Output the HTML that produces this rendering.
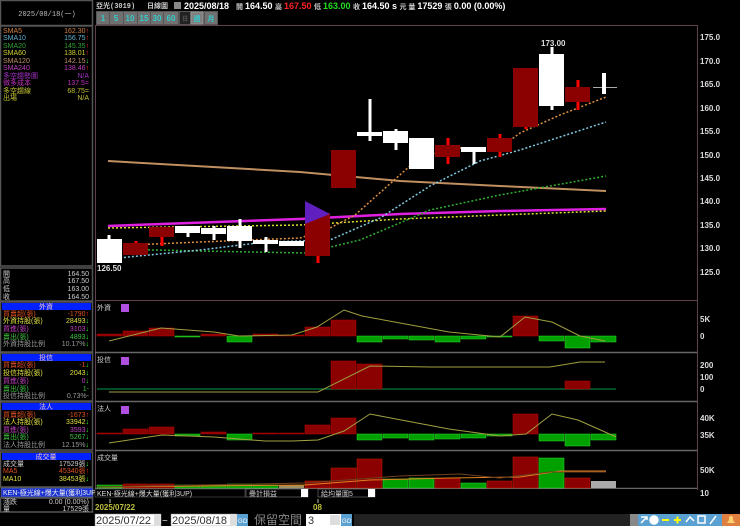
<!DOCTYPE html>
<html><head><meta charset="utf-8"><style>
html,body{margin:0;padding:0;background:#000;width:740px;height:526px;overflow:hidden}
svg{display:block}
text{font-family:"Liberation Sans","Noto Sans CJK TC",sans-serif}
.m{font-family:"Liberation Mono","Noto Sans CJK TC",monospace;font-size:7px}
.ax{font-size:8px;fill:#ddd;font-weight:bold}
</style></head><body>
<svg width="740" height="526" viewBox="0 0 740 526" xmlns="http://www.w3.org/2000/svg">
<rect width="740" height="526" fill="#000"/>
<g fill="none" stroke="#555" stroke-width="1.5">
<rect x="0.5" y="0.5" width="92" height="25"/>
<rect x="0.5" y="26" width="92" height="240"/>
<rect x="0.5" y="268" width="92" height="33"/>
<rect x="0.5" y="302" width="92" height="50"/>
<rect x="0.5" y="353" width="92" height="48"/>
<rect x="0.5" y="402" width="92" height="48"/>
<rect x="0.5" y="452" width="92" height="35"/>
<rect x="0.5" y="498" width="92" height="14"/>
</g>
<text x="47" y="16" text-anchor="middle" class="m" fill="#bbb">2025/08/18(一)</text>
<g class="m">
<text x="3" y="33" fill="#d08040">SMA5</text><text x="89" y="33" text-anchor="end" fill="#d08040">162.30<tspan fill="#f22">↑</tspan></text>
<text x="3" y="40" fill="#60b0d0">SMA10</text><text x="89" y="40" text-anchor="end" fill="#60b0d0">156.75<tspan fill="#f22">↑</tspan></text>
<text x="3" y="48" fill="#30a030">SMA20</text><text x="89" y="48" text-anchor="end" fill="#30a030">145.35<tspan fill="#f22">↑</tspan></text>
<text x="3" y="55" fill="#d0d030">SMA60</text><text x="89" y="55" text-anchor="end" fill="#d0d030">138.01<tspan fill="#f22">↑</tspan></text>
<text x="3" y="63" fill="#c09060">SMA120</text><text x="89" y="63" text-anchor="end" fill="#c09060">142.15<tspan fill="#2f2">↓</tspan></text>
<text x="3" y="70" fill="#c040c0">SMA240</text><text x="89" y="70" text-anchor="end" fill="#c040c0">138.46<tspan fill="#f22">↑</tspan></text>
<text x="3" y="78" fill="#a030c0">多空趨勢圖</text><text x="89" y="78" text-anchor="end" fill="#a030c0">N/A</text>
<text x="3" y="85" fill="#c030c0">微多成本</text><text x="89" y="85" text-anchor="end" fill="#c030c0">137.5=</text>
<text x="3" y="93" fill="#c0c030">多空趨線</text><text x="89" y="93" text-anchor="end" fill="#c0c030">68.75=</text>
<text x="3" y="100" fill="#c0c030">出場</text><text x="89" y="100" text-anchor="end" fill="#c0c030">N/A</text>
<text x="3" y="276" fill="#ccc">開</text><text x="89" y="276" text-anchor="end" fill="#ccc">164.50</text>
<text x="3" y="283" fill="#ccc">高</text><text x="89" y="283" text-anchor="end" fill="#ccc">167.50</text>
<text x="3" y="291" fill="#ccc">低</text><text x="89" y="291" text-anchor="end" fill="#ccc">163.00</text>
<text x="3" y="299" fill="#ccc">收</text><text x="89" y="299" text-anchor="end" fill="#ccc">164.50</text>
<rect x="2" y="303" width="89" height="7" fill="#0020ff"/><text x="46" y="309" text-anchor="middle" fill="#f0c0c0">外資</text>
<text x="3" y="316" fill="#e05020">買賣超(張)</text><text x="89" y="316" text-anchor="end" fill="#e05020">-1790<tspan fill="#f22">↑</tspan></text>
<text x="3" y="323" fill="#e0e040">外資持股(張)</text><text x="89" y="323" text-anchor="end" fill="#e0e040">28493<tspan fill="#2f2">↓</tspan></text>
<text x="3" y="331" fill="#c040c0">買進(張)</text><text x="89" y="331" text-anchor="end" fill="#c040c0">3103<tspan fill="#2f2">↓</tspan></text>
<text x="3" y="339" fill="#40c040">賣出(張)</text><text x="89" y="339" text-anchor="end" fill="#40c040">4893<tspan fill="#2f2">↓</tspan></text>
<text x="3" y="346" fill="#999">外資持股比例</text><text x="89" y="346" text-anchor="end" fill="#999">10.17%<tspan fill="#2f2">↓</tspan></text>
<rect x="2" y="354" width="89" height="7" fill="#0020ff"/><text x="46" y="360" text-anchor="middle" fill="#f0c0c0">投信</text>
<text x="3" y="367" fill="#e05020">買賣超(張)</text><text x="89" y="367" text-anchor="end" fill="#e05020">-1<tspan fill="#2f2">↓</tspan></text>
<text x="3" y="375" fill="#e0e040">投信持股(張)</text><text x="89" y="375" text-anchor="end" fill="#e0e040">2043<tspan fill="#2f2">↓</tspan></text>
<text x="3" y="383" fill="#c040c0">買進(張)</text><text x="89" y="383" text-anchor="end" fill="#c040c0">0<tspan fill="#2f2">↓</tspan></text>
<text x="3" y="391" fill="#40c040">賣出(張)</text><text x="89" y="391" text-anchor="end" fill="#40c040">1-</text>
<text x="3" y="398" fill="#999">投信持股比例</text><text x="89" y="398" text-anchor="end" fill="#999">0.73%-</text>
<rect x="2" y="403" width="89" height="7" fill="#0020ff"/><text x="46" y="409" text-anchor="middle" fill="#f0c0c0">法人</text>
<text x="3" y="417" fill="#e05020">買賣超(張)</text><text x="89" y="417" text-anchor="end" fill="#e05020">-1673<tspan fill="#f22">↑</tspan></text>
<text x="3" y="424" fill="#e0e040">法人持股(張)</text><text x="89" y="424" text-anchor="end" fill="#e0e040">33942<tspan fill="#2f2">↓</tspan></text>
<text x="3" y="432" fill="#c040c0">買進(張)</text><text x="89" y="432" text-anchor="end" fill="#c040c0">3593<tspan fill="#2f2">↓</tspan></text>
<text x="3" y="439" fill="#40c040">賣出(張)</text><text x="89" y="439" text-anchor="end" fill="#40c040">5267<tspan fill="#2f2">↓</tspan></text>
<text x="3" y="447" fill="#999">法人持股比例</text><text x="89" y="447" text-anchor="end" fill="#999">12.15%<tspan fill="#2f2">↓</tspan></text>
<rect x="2" y="453" width="89" height="7" fill="#0020ff"/><text x="46" y="459" text-anchor="middle" fill="#f0c0c0">成交量</text>
<text x="3" y="466" fill="#ccc">成交量</text><text x="89" y="466" text-anchor="end" fill="#ccc">17529張<tspan fill="#2f2">↓</tspan></text>
<text x="3" y="473" fill="#e05020">MA5</text><text x="89" y="473" text-anchor="end" fill="#e05020">45340張<tspan fill="#f22">↑</tspan></text>
<text x="3" y="481" fill="#e0e040">MA10</text><text x="89" y="481" text-anchor="end" fill="#e0e040">38453張<tspan fill="#2f2">↓</tspan></text>
<rect x="1" y="488" width="92" height="9" fill="#1830d0" stroke="#888" stroke-width="0.5"/><text x="3" y="495" fill="#eee">KEN-極光線+爆大量(獲利3UP)</text>
<text x="3" y="504" fill="#ccc">漲跌</text><text x="89" y="504" text-anchor="end" fill="#ccc">0.00 (0.00%)</text>
<text x="3" y="511" fill="#ccc">量</text><text x="89" y="511" text-anchor="end" fill="#ccc">17529張</text>
</g>
<!-- top bar -->
<g font-size="9" font-weight="bold">
<text x="96" y="8" class="m" fill="#ccc" font-size="8">亞光(3019)</text>
<text x="147" y="8" class="m" fill="#ccc" font-size="7">日線圖</text>
<rect x="174" y="2" width="7" height="7" fill="#888"/>
<text x="184" y="9" fill="#fff">2025/08/18</text>
<text x="236" y="9" fill="#fff"><tspan font-size="7" fill="#ccc">開 </tspan>164.50 <tspan font-size="7" fill="#ccc">高 </tspan><tspan fill="#f22">167.50</tspan> <tspan font-size="7" fill="#ccc">低 </tspan><tspan fill="#2d2">163.00</tspan> <tspan font-size="7" fill="#ccc">收 </tspan>164.50 s <tspan font-size="7" fill="#ccc">元 量 </tspan>17529 <tspan font-size="7" fill="#ccc">張 </tspan> 0.00 (0.00%)</text>
</g>
<g font-size="8" font-weight="bold" fill="#3cc">
<rect x="96" y="11" width="122" height="14" fill="#555"/>
<rect x="97" y="12" width="12" height="12" fill="#707070"/><text x="103" y="21" text-anchor="middle">1</text>
<rect x="110" y="12" width="13" height="12" fill="#707070"/><text x="116" y="21" text-anchor="middle">5</text>
<rect x="124" y="12" width="13" height="12" fill="#707070"/><text x="130" y="21" text-anchor="middle">10</text>
<rect x="138" y="12" width="12" height="12" fill="#707070"/><text x="144" y="21" text-anchor="middle">15</text>
<rect x="151" y="12" width="12" height="12" fill="#707070"/><text x="157" y="21" text-anchor="middle">30</text>
<rect x="164" y="12" width="14" height="12" fill="#707070"/><text x="171" y="21" text-anchor="middle">60</text>
<rect x="180" y="12" width="10" height="12" fill="#222"/><text x="185" y="21" text-anchor="middle" fill="#555" font-size="6">日</text>
<rect x="191" y="12" width="12" height="12" fill="#808080" stroke="#aaa" stroke-width="0.5"/><text x="197" y="21" text-anchor="middle" font-size="7">週</text>
<rect x="205" y="12" width="12" height="12" fill="#707070"/><text x="211" y="21" text-anchor="middle" font-size="7">月</text>
</g>
<!-- frames -->
<g fill="none" stroke="#604050" stroke-width="1">
<line x1="95" y1="25.5" x2="697" y2="25.5"/>
<line x1="697.5" y1="25" x2="697.5" y2="490"/>
<line x1="95.5" y1="25" x2="95.5" y2="490"/>
<line x1="95" y1="300.5" x2="697" y2="300.5"/>
</g>
<g stroke="#666" stroke-width="1.5">
<line x1="95" y1="352.5" x2="697" y2="352.5"/>
<line x1="95" y1="401.5" x2="697" y2="401.5"/>
<line x1="95" y1="450.5" x2="697" y2="450.5"/>
<line x1="95" y1="488.5" x2="697" y2="488.5"/>
</g>
<g class="ax">
<text x="700" y="40">175.0</text><text x="700" y="64">170.0</text><text x="700" y="87">165.0</text><text x="700" y="111">160.0</text><text x="700" y="134">155.0</text><text x="700" y="158">150.0</text><text x="700" y="181">145.0</text><text x="700" y="204">140.0</text><text x="700" y="228">135.0</text><text x="700" y="251">130.0</text><text x="700" y="275">125.0</text>
<text x="700" y="322">5K</text><text x="700" y="339">0</text>
<text x="700" y="368">200</text><text x="700" y="380">100</text><text x="700" y="392">0</text>
<text x="700" y="421">40K</text><text x="700" y="438">35K</text>
<text x="700" y="473">50K</text><text x="700" y="496">10</text>
</g>
<!-- MA lines -->
<polyline points="108,161 300,172 400,181 500,186 606,191" fill="none" stroke="#c09060" stroke-width="2"/>
<polyline points="108,226 300,219 400,214 500,211 606,209" fill="none" stroke="#e020e0" stroke-width="2.5"/>
<polyline points="108,228 300,225 400,219 500,215 606,211" fill="none" stroke="#e0e030" stroke-width="1.5" stroke-dasharray="2,2"/>
<polyline points="108,249 200,251 305,253 360,240 430,210 500,195 606,176" fill="none" stroke="#30b030" stroke-width="1.5" stroke-dasharray="2,2"/>
<polyline points="108,259 200,250 265,242 330,240 380,218 430,186 480,161 520,150 606,122" fill="none" stroke="#80c8e0" stroke-width="1.5" stroke-dasharray="2,2"/>
<polyline points="108,246 200,242 300,238 330,228 355,215 420,157 455,148 500,148 520,133 560,115 606,97" fill="none" stroke="#e09040" stroke-width="1.5" stroke-dasharray="2,2"/>
<!-- candles -->
<line x1="109" y1="235" x2="109" y2="263" stroke="#fff" stroke-width="3"/><rect x="97" y="239" width="25" height="24" fill="#fff"/>
<line x1="136" y1="241" x2="136" y2="255" stroke="#f00" stroke-width="3"/><rect x="123" y="243" width="25" height="12" fill="#8b0000"/>
<line x1="162" y1="227" x2="162" y2="246" stroke="#f00" stroke-width="3"/><rect x="149" y="227" width="25" height="10" fill="#8b0000"/>
<line x1="188" y1="226" x2="188" y2="237" stroke="#fff" stroke-width="3"/><rect x="175" y="226" width="25" height="7" fill="#fff"/>
<line x1="214" y1="226" x2="214" y2="240" stroke="#fff" stroke-width="3"/><rect x="201" y="228" width="25" height="6" fill="#fff"/>
<line x1="240" y1="219" x2="240" y2="248" stroke="#fff" stroke-width="3"/><rect x="227" y="226" width="25" height="15" fill="#fff"/>
<line x1="266" y1="237" x2="266" y2="252" stroke="#fff" stroke-width="3"/><rect x="253" y="240" width="25" height="4" fill="#fff"/>
<rect x="279" y="241" width="25" height="5" fill="#fff"/>
<line x1="318" y1="213" x2="318" y2="263" stroke="#f00" stroke-width="3"/><rect x="305" y="213" width="25" height="43" fill="#8b0000"/>
<polygon points="305,201 330,214 305,224" fill="#6020c0"/>
<rect x="331" y="150" width="25" height="38" fill="#8b0000"/>
<line x1="370" y1="99" x2="370" y2="141" stroke="#fff" stroke-width="3"/><rect x="357" y="132" width="25" height="4" fill="#fff"/>
<line x1="396" y1="129" x2="396" y2="150" stroke="#fff" stroke-width="3"/><rect x="383" y="131" width="25" height="12" fill="#fff"/>
<rect x="409" y="138" width="25" height="31" fill="#fff"/>
<line x1="448" y1="138" x2="448" y2="164" stroke="#f00" stroke-width="3"/><rect x="435" y="145" width="25" height="12" fill="#8b0000"/>
<line x1="474" y1="147" x2="474" y2="164" stroke="#fff" stroke-width="3"/><rect x="461" y="147" width="25" height="5" fill="#fff"/>
<line x1="500" y1="134" x2="500" y2="157" stroke="#f00" stroke-width="3"/><rect x="487" y="138" width="25" height="14" fill="#8b0000"/>
<line x1="526" y1="68" x2="526" y2="129" stroke="#f00" stroke-width="3"/><rect x="513" y="68" width="25" height="59" fill="#8b0000"/>
<line x1="552" y1="47" x2="552" y2="110" stroke="#fff" stroke-width="3"/><rect x="539" y="54" width="25" height="52" fill="#fff"/>
<line x1="578" y1="80" x2="578" y2="110" stroke="#f00" stroke-width="3"/><rect x="565" y="87" width="25" height="15" fill="#8b0000"/>
<line x1="593" y1="87.5" x2="617" y2="87.5" stroke="#aaa" stroke-width="1"/><rect x="602" y="73" width="4" height="21" fill="#fff"/>
<text x="541" y="46" font-size="8" fill="#ddd" font-weight="bold">173.00</text>
<text x="97" y="271" font-size="8" fill="#ddd" font-weight="bold">126.50</text>
<!-- subpanel titles -->
<g class="m" fill="#ccc" font-size="6">
<text x="97" y="310">外資</text><text x="97" y="362">投信</text><text x="97" y="411">法人</text><text x="97" y="460">成交量</text>
</g>
<g fill="#b050e0"><rect x="121" y="304" width="8" height="8"/><rect x="121" y="357" width="8" height="8"/><rect x="121" y="406" width="8" height="8"/></g>
<!-- panel1 -->
<g fill="#8b0000" stroke="#b00" stroke-width="0.5">
<rect x="97" y="334" width="25" height="2"/><rect x="123" y="331" width="25" height="5"/><rect x="149" y="328" width="25" height="8"/><rect x="201" y="334" width="25" height="2"/><rect x="253" y="334" width="25" height="2"/><rect x="279" y="335" width="25" height="1"/><rect x="305" y="327" width="25" height="9"/><rect x="331" y="320" width="25" height="16"/><rect x="513" y="316" width="25" height="20"/>
</g>
<g fill="#00a000" stroke="#3d3" stroke-width="0.5">
<rect x="175" y="336" width="25" height="1"/><rect x="227" y="336" width="25" height="6"/><rect x="357" y="336" width="25" height="6"/><rect x="383" y="336" width="25" height="3"/><rect x="409" y="336" width="25" height="4"/><rect x="435" y="336" width="25" height="6"/><rect x="461" y="336" width="25" height="3"/><rect x="487" y="336" width="25" height="1"/><rect x="539" y="336" width="25" height="5"/><rect x="565" y="336" width="25" height="12"/><rect x="591" y="336" width="25" height="6"/>
</g>
<polyline points="109,341 161,328 214,332 239,336 292,335 317,327 344,310 362,316 449,332 500,337 525,317 552,322 580,336 605,341" fill="none" stroke="#a0a040" stroke-width="1"/>
<!-- panel2 -->
<line x1="97" y1="389" x2="616" y2="389" stroke="#063" stroke-width="1.5"/>
<g fill="#8b0000" stroke="#b00" stroke-width="0.5"><rect x="331" y="361" width="25" height="28"/><rect x="357" y="364" width="25" height="25"/><rect x="565" y="381" width="25" height="8"/></g>
<polyline points="109,392 318,392 370,366 430,367 550,367 580,362 605,362" fill="none" stroke="#a0a040" stroke-width="1"/>
<!-- panel3 -->
<g fill="#8b0000" stroke="#b00" stroke-width="0.5">
<rect x="97" y="433" width="25" height="1"/><rect x="123" y="429" width="25" height="5"/><rect x="149" y="427" width="25" height="7"/><rect x="201" y="432" width="25" height="2"/><rect x="253" y="433" width="25" height="1"/><rect x="279" y="433" width="25" height="1"/><rect x="305" y="425" width="25" height="9"/><rect x="331" y="418" width="25" height="16"/><rect x="513" y="414" width="25" height="20"/>
</g>
<g fill="#00a000" stroke="#3d3" stroke-width="0.5">
<rect x="175" y="434" width="25" height="2"/><rect x="227" y="434" width="25" height="6"/><rect x="357" y="434" width="25" height="6"/><rect x="383" y="434" width="25" height="4"/><rect x="409" y="434" width="25" height="6"/><rect x="435" y="434" width="25" height="5"/><rect x="461" y="434" width="25" height="4"/><rect x="487" y="434" width="25" height="2"/><rect x="539" y="434" width="25" height="7"/><rect x="565" y="434" width="25" height="12"/><rect x="591" y="434" width="25" height="6"/>
</g>
<polyline points="109,443 162,435 214,437 265,441 292,441 318,440 344,431 370,414 396,419 449,429 500,436 526,434 552,414 578,420 605,432 616,437" fill="none" stroke="#a0a040" stroke-width="1"/>
<!-- panel4 -->
<g fill="#8b0000" stroke="#c20" stroke-width="0.5">
<rect x="123" y="484" width="25" height="4"/><rect x="149" y="484" width="25" height="4"/><rect x="305" y="481" width="25" height="7"/><rect x="331" y="468" width="25" height="20"/><rect x="357" y="459" width="25" height="29"/><rect x="435" y="478" width="25" height="10"/><rect x="487" y="481" width="25" height="7"/><rect x="513" y="457" width="25" height="31"/><rect x="565" y="478" width="25" height="10"/>
</g>
<g fill="#00a000" stroke="#3d3" stroke-width="0.5">
<rect x="97" y="485" width="25" height="3"/><rect x="175" y="485" width="25" height="3"/><rect x="201" y="485" width="25" height="3"/><rect x="227" y="484" width="25" height="4"/><rect x="253" y="485" width="25" height="3"/><rect x="383" y="479" width="25" height="9"/><rect x="409" y="478" width="25" height="10"/><rect x="461" y="483" width="25" height="5"/><rect x="539" y="458" width="25" height="30"/>
</g>
<rect x="279" y="485" width="25" height="3" fill="#a09060"/>
<rect x="591" y="481" width="25" height="7" fill="#aaa"/>
<polyline points="97,487 305,485 370,480 450,478 520,477 560,471 606,471" fill="none" stroke="#e08020" stroke-width="1"/>
<polyline points="97,487 305,483 400,476 460,474 500,478 550,472 606,472" fill="none" stroke="#704020" stroke-width="1"/>
<!-- bottom toolbar -->
<rect x="95" y="489" width="602" height="9" fill="#000"/>
<g class="m" font-size="6.5">
<rect x="95" y="489" width="150" height="8" fill="#000" stroke="#666" stroke-width="0.5"/><text x="97" y="496" fill="#ddd">KEN-極光線+爆大量(獲利3UP)</text>
<rect x="246" y="489" width="62" height="8" fill="#000" stroke="#999" stroke-width="0.5"/><text x="249" y="496" fill="#ccc">疊計損益</text>
<rect x="301" y="489" width="7" height="8" fill="#fff"/>
<rect x="318" y="489" width="57" height="8" fill="#000" stroke="#999" stroke-width="0.5"/><text x="321" y="496" fill="#ccc">給均量圖5</text>
<rect x="368" y="489" width="7" height="8" fill="#fff"/>
</g>
<line x1="110" y1="499" x2="110" y2="503" stroke="#bb9" stroke-width="1"/>
<line x1="318" y1="499" x2="318" y2="503" stroke="#bb9" stroke-width="1"/>
<text x="95" y="510" font-size="8" font-weight="bold" fill="#c0c040">2025/07/22</text>
<text x="313" y="510" font-size="8" font-weight="bold" fill="#c0c040">08</text>
<!-- bottom row -->
<rect x="0" y="513" width="740" height="13" fill="#000"/>
<rect x="95" y="514" width="66" height="12" fill="#fff" stroke="#888" stroke-width="0.5"/>
<text x="96" y="524" font-size="11" fill="#333">2025/07/22</text>
<rect x="154" y="515" width="6" height="10" fill="#ddd"/>
<text x="162" y="524" font-size="10" fill="#ddd">~</text>
<rect x="171" y="514" width="66" height="12" fill="#fff" stroke="#888" stroke-width="0.5"/>
<text x="172" y="524" font-size="11" fill="#333">2025/08/18</text>
<rect x="230" y="515" width="6" height="10" fill="#ddd"/>
<rect x="237" y="514" width="11" height="12" fill="#5aa0d0"/><text x="238" y="523" font-size="6" fill="#fff">GO</text>
<text x="254" y="524" font-size="12" fill="#888">保留空間</text>
<rect x="306" y="514" width="35" height="12" fill="#fff"/>
<text x="308" y="524" font-size="11" fill="#333">3</text>
<rect x="330" y="515" width="10" height="10" fill="#ddd"/>
<rect x="341" y="514" width="11" height="12" fill="#5aa0d0"/><text x="342" y="523" font-size="6" fill="#fff">GO</text>
<rect x="354" y="514" width="278" height="12" fill="#222"/>
<rect x="630" y="514" width="8" height="12" fill="#888"/>
<rect x="638" y="514" width="102" height="12" fill="#5aa0d0"/>
<g stroke="#fff" stroke-width="1.5" fill="none">
<path d="M641 523 L647 517 M641 517 L647 517 L647 520"/>
<circle cx="654" cy="520" r="4" fill="#fff"/>
<line x1="662" y1="520" x2="669" y2="520" stroke="#ff0" stroke-width="2"/>
<path d="M674 520 L681 520 M677.5 516.5 L677.5 523.5" stroke="#ff0" stroke-width="2"/>
<path d="M686 522 L690 517 L694 521"/>
<rect x="698" y="516" width="7" height="7"/>
<path d="M710 524 L716 516"/>
</g>
<rect x="722" y="514" width="18" height="12" fill="#e08040"/>
<path d="M727 523 L735 523 L733 520 L733 517 Q731 515 729 517 L729 520 Z" fill="#ffd070"/>
</svg>
</body></html>
